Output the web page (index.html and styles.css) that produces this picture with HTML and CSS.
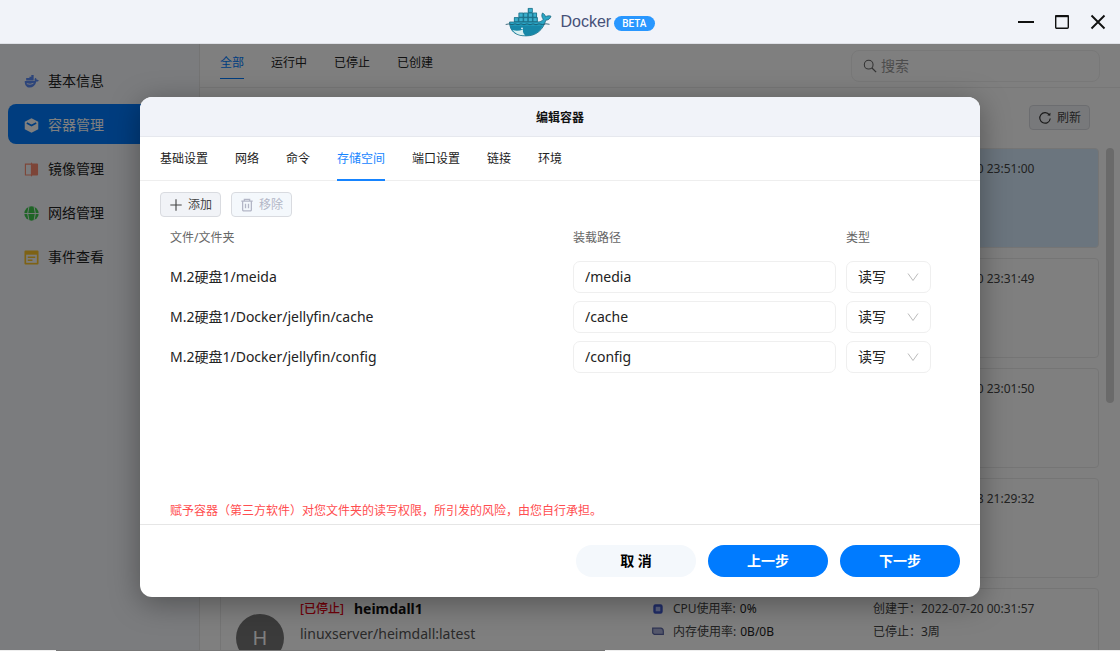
FILE: index.html
```html
<!DOCTYPE html>
<html lang="zh-CN">
<head>
<meta charset="utf-8">
<meta name="viewport" content="width=device-width, initial-scale=1">
<title>Docker</title>
<link rel="stylesheet" href="styles.css">
</head>
<body>
<div class="app">
  <header class="titlebar">
    <div class="brand">
      <svg class="brand-logo" viewBox="0 0 48 30" aria-hidden="true">
        <path d="M9 15v-4.800h4.600V5.800h9.200V1.200h4.600v4.600h4.600v4.400h.8V15z" fill="#1f7f9c"/>
        <path d="M9.300 14.700v-4h4v4zM14 14.700v-4h4v4zM18.700 14.700v-4h4v4zM23.400 14.700v-4h4v4zM28.100 14.700v-4h4v4zM14 10.100v-4h4v4zM18.700 10.100v-4h4v4zM23.400 10.100v-4h4v4zM28.100 10.100v-4h3.500v4zM23.400 5.400v-4h4v4z" fill="#3aafcd" stroke="#1b6a82" stroke-width=".6"/>
        <path d="M4.500 15h27.500c3 0 5.300-.7 6.300-2.800-1.600-1.900-2-4-.8-6.200 1.700.8 2.700 2.100 3 3.800 1.600-1 3.400-1.300 5.500-.6-.9 2.700-2.700 3.800-5.200 4-2.700 10-9.800 15.700-19.800 15.700C10.800 28.900 4.700 24.500 4.500 15z" fill="#2aa6c6" stroke="#1c6a80" stroke-width=".8"/>
        <path d="M5 18.500h32.500c-3 6.500-8.500 9.800-16 9.800C11 28.300 6 24.500 5 18.500z" fill="#1787a8"/>
        <path d="M7.500 23c3.500 1.300 7 1 10.500-.6-.4 2.300.4 4.300 2.300 5.900-5.800.3-10.100-1.500-12.800-5.300z" fill="#d8eff1"/>
        <path d="M.7 17.500l3.300-.6 3 .8 3-.8 3 .8 3-.8 3 .8 3-.8 3 .8 3-.8 3 .8 3-.8 3.500.6 3.500-.7 3.500.5" fill="none" stroke="#174e62" stroke-width=".8"/>
        <circle cx="17" cy="21.300" r=".9" fill="#fff"/>
      </svg>
      <h1 class="brand-name">Docker</h1>
      <span class="badge">BETA</span>
    </div>
    <div class="window-controls">
      <button type="button" aria-label="最小化"><svg viewBox="0 0 16 16"><path d="M0 8h16" stroke="#111" stroke-width="2"/></svg></button>
      <button type="button" aria-label="最大化"><svg viewBox="0 0 16 16"><rect x="1.700" y="1.700" width="12.600" height="12.600" rx="1" fill="none" stroke="#111" stroke-width="1.400"/><path d="M1.200 2.200h13.600" stroke="#111" stroke-width="2"/></svg></button>
      <button type="button" aria-label="关闭"><svg viewBox="0 0 16 16"><path d="M1.500 1.500l13 13M14.500 1.500l-13 13" stroke="#111" stroke-width="1.900"/></svg></button>
    </div>
  </header>

  <div class="workspace">
    <nav class="sidebar">
      <a class="nav-item" href="#info"><svg viewBox="0 0 16 16"><path d="M.8 7.500h10.700c-.5-1.300-.3-2.500.6-3.500 1 .6 1.500 1.400 1.500 2.300 1-.2 1.600 0 2.200.5-.6 1-1.500 1.400-2.600 1.300-1.200 4.300-3.700 6.400-7.200 6.400C2.800 14.500.6 12 .8 7.500z" fill="#5b8af5"/><path d="M2.300 7V4.300h3.500V3h2V1h2.500v6z" fill="#5b8af5"/><path d="M3 10.300q3.500 1.500 7-.3" stroke="#f5f8fc" fill="none"/></svg>基本信息</a>
      <a class="nav-item nav-active" href="#containers"><svg viewBox="0 0 16 16"><path d="M8 .3l7.200 3.800v8L8 15.800.8 12.100v-8z" fill="#fff"/><path d="M3 5.300L8 8l5-2.700" fill="none" stroke="#007bff" stroke-width="1.700"/></svg>容器管理</a>
      <a class="nav-item" href="#images"><svg viewBox="0 0 16 16"><path d="M1.500 2.200h6.500v11.600H1.500z" fill="none" stroke="#fb8b70" stroke-width="1.200"/><path d="M8 1.600h6a1 1 0 0 1 1 1v10.800a1 1 0 0 1-1 1H8z" fill="#fb8b70"/><path d="M8 .7v14.600" stroke="#fb8b70" stroke-width="1.200"/></svg>镜像管理</a>
      <a class="nav-item" href="#network"><svg viewBox="0 0 16 16"><circle cx="8" cy="8" r="7.700" fill="#3fc94d"/><path d="M5.300.5q-2.800 7.500 0 15M10.700.5q2.800 7.500 0 15M0 8h16" stroke="#f5f8fc" fill="none"/></svg>网络管理</a>
      <a class="nav-item" href="#events"><svg viewBox="0 0 16 16"><path d="M1.500.5h13a1 1 0 0 1 1 1v13a1 1 0 0 1-1 1h-13a1 1 0 0 1-1-1v-13a1 1 0 0 1 1-1z" fill="#fcc52a"/><path d="M2.300 5h11.400v8.700H2.300z" fill="#f5f8fc"/><path d="M4 7.700h8M4 10.900h5" stroke="#fcc52a" stroke-width="1.600"/></svg>事件查看</a>
    </nav>

    <main class="main">
      <div class="toolbar">
        <nav class="filters">
          <a class="filter filter-active" href="#all">全部</a>
          <a class="filter" href="#running">运行中</a>
          <a class="filter" href="#stopped">已停止</a>
          <a class="filter" href="#created">已创建</a>
        </nav>
        <label class="search">
          <svg viewBox="0 0 16 16" aria-hidden="true"><circle cx="6.500" cy="6.500" r="5" fill="none" stroke="#666" stroke-width="1.200"/><path d="M10 10l5 5" stroke="#666" stroke-width="1.400"/></svg>
          <input type="search" placeholder="搜索" aria-label="搜索">
        </label>
      </div>
      <div class="actions">
        <button class="small-button" type="button"><svg viewBox="0 0 16 16" aria-hidden="true"><path d="M13 4.500A6 6 0 1 0 14 8.500" fill="none" stroke="#333" stroke-width="1.300"/><path d="M10.500 4.800l3.500.6.300-3.500z" fill="#333"/></svg>刷新</button>
      </div>
      <div class="list-area">
        <div class="cards">
          <article class="card card-selected"><span></span><span></span><span></span><div class="times"><span>创建于：2022-08-10 23:51:00</span></div></article>
          <article class="card"><span></span><span></span><span></span><div class="times"><span>创建于：2022-08-10 23:31:49</span></div></article>
          <article class="card"><span></span><span></span><span></span><div class="times"><span>创建于：2022-08-10 23:01:50</span></div></article>
          <article class="card"><span></span><span></span><span></span><div class="times"><span>创建于：2022-08-08 21:29:32</span></div></article>
          <article class="card">
            <div class="avatar">H</div>
            <div class="identity">
              <div class="container-title"><span class="state">[已停止]</span><strong>heimdall1</strong></div>
              <div class="image-name">linuxserver/heimdall:latest</div>
            </div>
            <div class="usage">
              <span class="usage-row"><svg viewBox="0 0 12 12" aria-hidden="true"><rect x="2.500" y="2.500" width="7" height="7" rx="1" fill="#b5c2ff" stroke="#415bd0" stroke-width="2.400"/></svg>CPU使用率: <b>0%</b></span>
              <span class="usage-row"><svg viewBox="0 0 12 12" aria-hidden="true"><path d="M.7 2.200h8.300q2.300.6 2.300 3.100v3H2.200L.7 7z" fill="#aab1d8" stroke="#5a65a5" stroke-width="1.200"/></svg>内存使用率: <b>0B/0B</b></span>
            </div>
            <div class="times"><span>创建于：2022-07-20 00:31:57</span><span>已停止：3周</span></div>
          </article>
        </div>
        <div class="scrollbar"></div>
      </div>
    </main>

    <div class="overlay">
      <section class="dialog" role="dialog" aria-modal="true" aria-labelledby="dialog-title">
        <h2 class="dialog-title" id="dialog-title">编辑容器</h2>
        <nav class="tabs">
          <a class="tab" href="#basic">基础设置</a>
          <a class="tab" href="#net">网络</a>
          <a class="tab" href="#command">命令</a>
          <a class="tab tab-active" href="#storage">存储空间</a>
          <a class="tab" href="#ports">端口设置</a>
          <a class="tab" href="#links">链接</a>
          <a class="tab" href="#env">环境</a>
        </nav>
        <div class="dialog-body">
          <div class="button-row">
            <button class="small-button" type="button"><svg viewBox="0 0 16 16" aria-hidden="true"><path d="M8 1.500v13M1.500 8h13" stroke="#444" stroke-width="1.300"/></svg>添加</button>
            <button class="small-button" type="button" disabled><svg viewBox="0 0 16 16" aria-hidden="true"><path d="M1.500 3.500h13M5 3V1.500h6V3M3 4v9.500a1.200 1.200 0 0 0 1.200 1.200h7.600a1.200 1.200 0 0 0 1.200-1.200V4M6.300 6.500v5.200M9.700 6.500v5.200" fill="none" stroke="#b3b6c6" stroke-width="1.500"/></svg>移除</button>
          </div>
          <table class="mounts">
            <colgroup><col class="col-source"><col><col class="col-type"></colgroup>
            <thead><tr><th>文件/文件夹</th><th>装载路径</th><th>类型</th></tr></thead>
            <tbody>
              <tr>
                <td>M.2硬盘1/meida</td>
                <td><input class="path" type="text" value="/media" aria-label="装载路径 1"></td>
                <td><span class="select"><select aria-label="类型 1"><option>读写</option><option>只读</option></select><svg viewBox="0 0 12 12" aria-hidden="true"><path d="M1 2.500l5 7 5-7" fill="none" stroke="#bbb"/></svg></span></td>
              </tr>
              <tr>
                <td>M.2硬盘1/Docker/jellyfin/cache</td>
                <td><input class="path" type="text" value="/cache" aria-label="装载路径 2"></td>
                <td><span class="select"><select aria-label="类型 2"><option>读写</option><option>只读</option></select><svg viewBox="0 0 12 12" aria-hidden="true"><path d="M1 2.500l5 7 5-7" fill="none" stroke="#bbb"/></svg></span></td>
              </tr>
              <tr>
                <td>M.2硬盘1/Docker/jellyfin/config</td>
                <td><input class="path" type="text" value="/config" aria-label="装载路径 3"></td>
                <td><span class="select"><select aria-label="类型 3"><option>读写</option><option>只读</option></select><svg viewBox="0 0 12 12" aria-hidden="true"><path d="M1 2.500l5 7 5-7" fill="none" stroke="#bbb"/></svg></span></td>
              </tr>
            </tbody>
          </table>
          <p class="warning">赋予容器（第三方软件）对您文件夹的读写权限，所引发的风险，由您自行承担。</p>
        </div>
        <footer class="dialog-footer">
          <button class="pill pill-plain" type="button">取 消</button>
          <button class="pill" type="button">上一步</button>
          <button class="pill" type="button">下一步</button>
        </footer>
      </section>
    </div>
  </div>
  <div class="edge"></div>
</div>
</body>
</html>
```

FILE: styles.css
```css
* { box-sizing: border-box; }

body {
  margin: 0;
  color: #222;
  font: 12px/20px "Noto Sans", "Noto Sans CJK SC", sans-serif;
}

a { color: inherit; text-decoration: none; }
button, input, select { font: inherit; color: inherit; }
svg { display: block; flex: none; }

.app {
  display: grid;
  grid-template-rows: 44px minmax(0, 1fr) 1px;
  height: 100vh;
  overflow: hidden;
}

.titlebar {
  display: grid;
  grid-template-columns: 1fr auto 1fr;
  align-items: center;
  background: #f1f3f9;
  border-bottom: 1px solid #dfe1e7;
}

.brand { display: flex; grid-column: 2; align-items: center; padding-left: 40px; }
.brand-logo { width: 48px; height: 30px; margin-right: 7px; }
.brand-name {
  margin: 0;
  color: #465078;
  font: 16px/24px "Liberation Sans", sans-serif;
}
.badge {
  margin: 4px 0 0 3px;
  padding: 0 8px;
  border-radius: 8px;
  background: #2997ff;
  color: #fff;
  font: 500 10px/15px Roboto, sans-serif;
}

.window-controls {
  display: flex;
  justify-content: flex-end;
  gap: 20px;
  padding-right: 14px;
}
.window-controls button { padding: 0; border: 0; background: none; }
.window-controls svg { width: 16px; height: 16px; }

.workspace {
  position: relative;
  display: grid;
  grid-template-columns: 200px minmax(0, 1fr);
  overflow: hidden;
}

.sidebar {
  display: flex;
  flex-direction: column;
  gap: 4px;
  padding: 16px 8px;
  background: #f6f9fd;
  border-right: 1px solid #e8e8e8;
}
.nav-item {
  display: flex;
  align-items: center;
  gap: 9px;
  height: 40px;
  padding: 2px 16px 0;
  border-radius: 8px;
  font-size: 14px;
}
.nav-item svg { width: 15px; height: 15px; }
.nav-active { background: #007bff; color: #fff; }

.main { display: flex; flex-direction: column; min-width: 0; background: #fff; }
.toolbar {
  display: flex;
  flex: none;
  justify-content: space-between;
  align-items: center;
  height: 44px;
  padding: 0 20px;
  border-bottom: 1px solid #eee;
}
.filters { display: flex; gap: 27px; height: 26px; }
.filter { line-height: 20px; }
.filter-active { border-bottom: 1px solid #007bff; color: #007bff; }
.search {
  display: flex;
  align-items: center;
  gap: 4px;
  width: 249px;
  height: 32px;
  padding: 0 11px;
  border: 1px solid #f0f0f0;
  border-radius: 8px;
}
.search svg { width: 14px; height: 14px; }
.search input {
  flex: 1;
  min-width: 0;
  padding: 1px 0 0;
  border: 0;
  outline: 0;
  background: none;
  font-size: 14px;
}
.search input::placeholder { color: #999; }

.actions { display: flex; justify-content: flex-end; padding: 17px 30px; }
.small-button {
  display: flex;
  align-items: center;
  gap: 5px;
  height: 25px;
  padding: 0 8px;
  border: 1px solid #d9dbe0;
  border-radius: 4px;
  background: #f1f3f7;
  color: #444;
  line-height: 20px;
}
.small-button svg { width: 14px; height: 14px; }
.small-button:disabled { background: #f4f8fc; color: #b3b6c6; }

.list-area {
  display: flex;
  flex: 1;
  gap: 7px;
  min-height: 0;
  padding: 1px 6px 0 20px;
}
.cards { display: flex; flex: 1; flex-direction: column; gap: 10px; min-width: 0; overflow: hidden; }
.card {
  display: grid;
  flex: none;
  grid-template-columns: 48px 1fr 205px 210px;
  gap: 0 16px;
  height: 100px;
  padding: 10px 15px 8px;
  border: 1px solid #ebebeb;
  border-radius: 4px;
}
.card-selected { background: #d6ebfc; }
.times, .usage { display: flex; flex-direction: column; gap: 3px; color: #444; }
.avatar {
  height: 48px;
  margin-top: 15px;
  border-radius: 50%;
  background: #777;
  color: #fff;
  font-size: 20px;
  line-height: 48px;
  text-align: center;
}
.identity { display: flex; flex-direction: column; gap: 5px; font-size: 14px; }
.container-title { display: flex; gap: 10px; color: #111; }
.state { color: #e60012; font-size: 12px; font-weight: 500; }
.image-name { color: #555; }
.usage-row { display: flex; align-items: center; gap: 4px; }
.usage-row svg { width: 12px; height: 12px; margin-right: 5px; }
.usage-row b { color: #222; font-weight: 400; }
.scrollbar { width: 8px; height: 255px; border-radius: 4px; background: #d4d4d4; }

.overlay {
  position: absolute;
  inset: 0;
  display: flex;
  align-items: center;
  justify-content: center;
  background: rgb(0 0 0 / 50%);
}
.dialog {
  display: flex;
  flex-direction: column;
  width: 75%;
  min-height: 500px;
  overflow: hidden;
  border-radius: 12px;
  background: #fff;
  box-shadow: 0 6px 30px rgb(0 0 0 / 35%);
}
.dialog-title {
  height: 40px;
  margin: 0;
  border-bottom: 1px solid #e6e8ee;
  background: #f1f3f9;
  color: #111;
  font-size: 12px;
  font-weight: 700;
  line-height: 41px;
  text-align: center;
}
.tabs {
  display: flex;
  gap: 27px;
  height: 44px;
  padding: 0 20px;
  border-bottom: 1px solid #eee;
}
.tab { height: 44px; line-height: 44px; }
.tab-active { border-bottom: 2px solid #1684ff; color: #1684ff; }
.dialog-body { display: flex; flex: 1; flex-direction: column; padding: 11px 20px 3px; }
.button-row { display: flex; gap: 10px; }

.mounts { width: 100%; table-layout: fixed; border-collapse: collapse; }
.col-source { width: 413px; }
.col-type { width: 114px; }
.mounts th {
  height: 40px;
  padding: 2px 0 0;
  color: #666;
  font-weight: 400;
  text-align: left;
}
.mounts td { height: 40px; padding: 0; font-size: 14px; }
.mounts th:first-child, .mounts td:first-child { padding-left: 10px; }
.mounts td:nth-child(2) { padding-right: 10px; }
.path, .select select {
  display: block;
  width: 100%;
  height: 32px;
  padding: 0 11px;
  border: 1px solid #efefef;
  border-radius: 7px;
  outline: 0;
  background: #fff;
}
.path { padding-bottom: 2px; }
.select { display: grid; align-items: center; width: 85px; }
.select select, .select svg { grid-area: 1 / 1; }
.select select { appearance: none; }
.select svg { width: 12px; height: 12px; margin-right: 12px; justify-self: end; pointer-events: none; }

.warning { margin: auto 0 0; padding-left: 10px; color: #ff4d4f; }

.dialog-footer {
  display: flex;
  justify-content: flex-end;
  gap: 12px;
  padding: 20px;
  border-top: 1px solid #e6e6e6;
}
.pill {
  width: 120px;
  height: 32px;
  border: 0;
  border-radius: 16px;
  background: #007bff;
  color: #fff;
  font-size: 14px;
  font-weight: 700;
}
.pill-plain { background: #f4f8fc; color: #000; }

.edge { background: linear-gradient(90deg, #eee 0 5%, #777 5% 54%, #eee 54%); }
```
